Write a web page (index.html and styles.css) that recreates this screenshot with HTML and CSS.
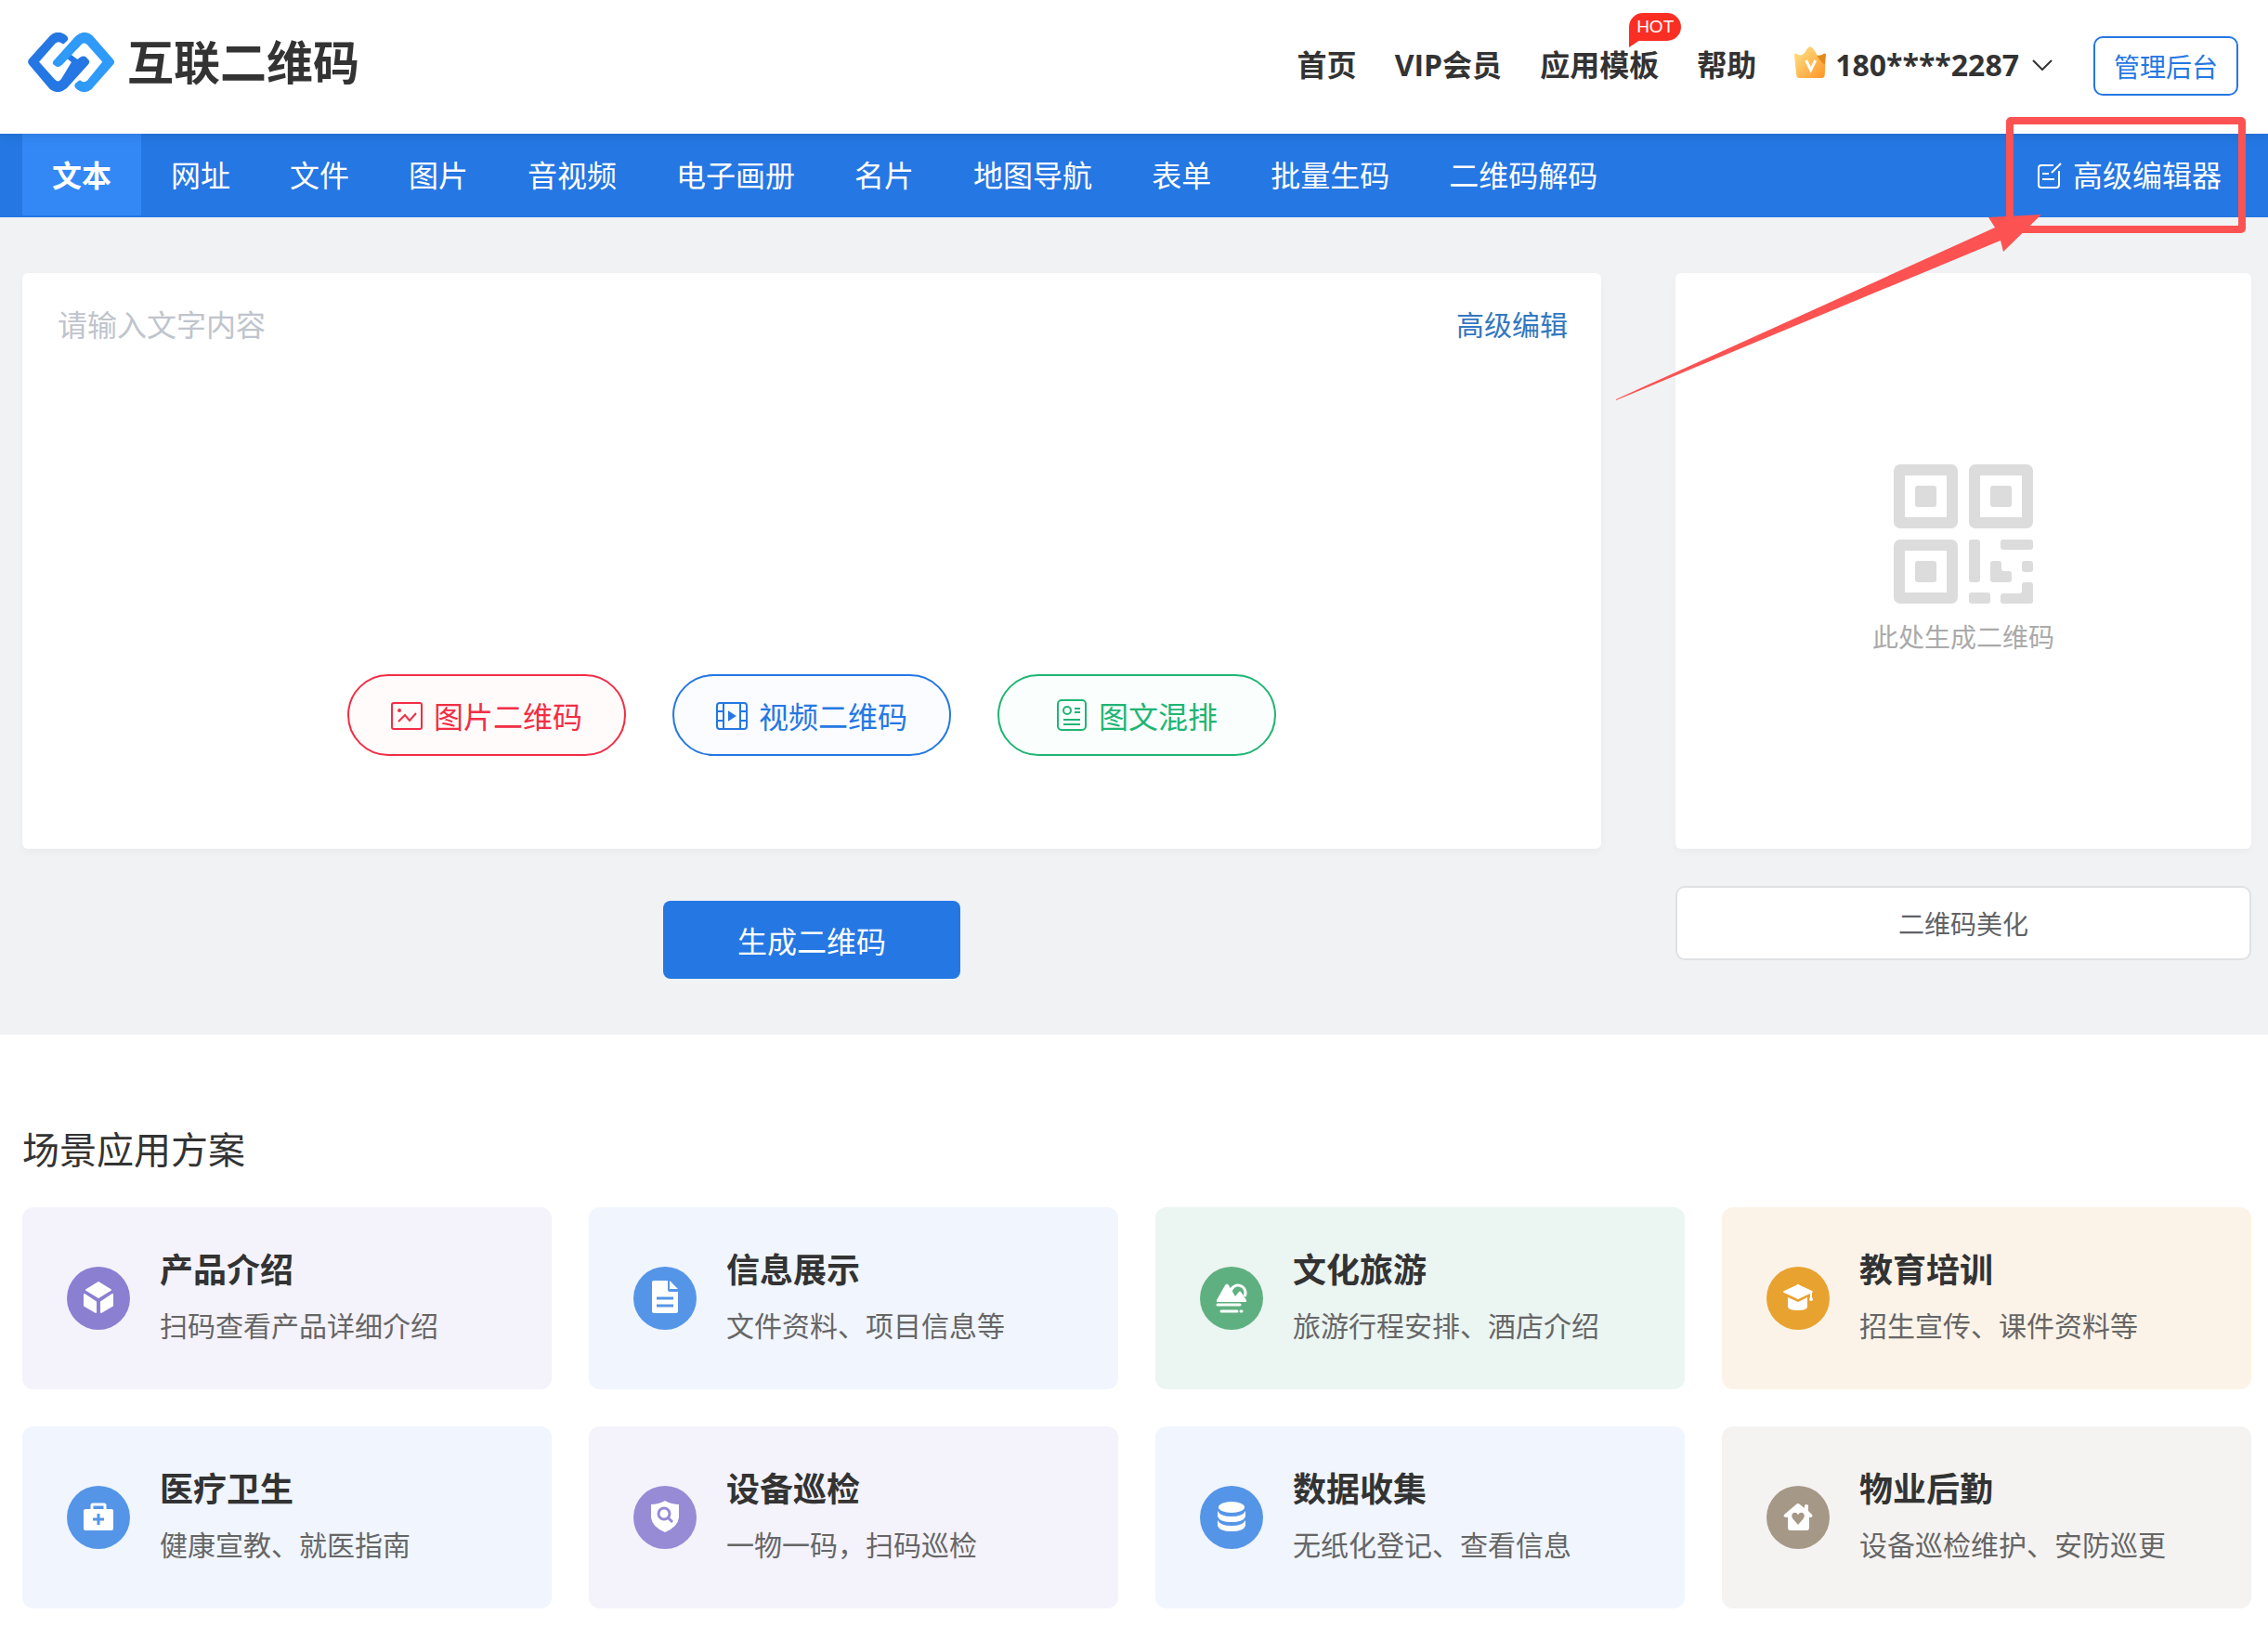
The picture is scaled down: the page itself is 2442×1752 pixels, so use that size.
FILE: index.html
```html
<!DOCTYPE html>
<html lang="zh-CN">
<head>
  <meta charset="UTF-8">
  <meta name="viewport" content="width=device-width, initial-scale=1.0">
  <title>互联二维码</title>
  <link rel="stylesheet" href="styles.css">
</head>
<body>

<header class="header">
  <a class="logo" href="#">
    <svg class="logo-img" viewBox="0 0 279 192" aria-hidden="true">
      <g stroke-width="8" stroke-linejoin="round">
        <path fill="#2577e3" stroke="#2577e3" d="M124 24L114 33Q98 20 85 33L31 95L84 154Q98 169 110 154L146 95L126 78L138 75L160 92L172 83Q180 78 187 84L193 91Q196 95 193 99L122 178Q97 198 73 179L7 101Q2 95 7 88L76 12Q97 -5 119 11Q129 18 124 24Z"/>
        <path fill="#2f9af8" stroke="#2f9af8" d="M86 94L158 14Q182 -6 206 13L272 89Q278 95 272 102L204 179Q185 196 163 182Q150 173 158 166L168 158Q183 171 196 156L246 95L195 37Q182 24 170 36L107 102Q98 110 91 104Q81 100 86 94Z"/>
      </g>
    </svg>
    <span>互联二维码</span>
  </a>
  <nav class="menu">
    <a href="#">首页</a>
    <a href="#">VIP会员</a>
    <a class="has-hot" href="#">应用模板<span class="hot">HOT</span></a>
    <a href="#">帮助</a>
    <a class="user" href="#">
      <svg class="crown" viewBox="0 0 102 102" aria-hidden="true">
        <defs>
          <linearGradient id="gold" x1="0" y1="0" x2="1" y2="1">
            <stop offset="0" stop-color="#ffe58a"/>
            <stop offset="1" stop-color="#ff9426"/>
          </linearGradient>
        </defs>
        <path fill="#e38a1c" d="M68 28Q84 32 96 23Q102 20 102 28L98 70L60 60Z"/>
        <path fill="url(#gold)" d="M0 28Q0 20 6 23Q22 34 32 22L43 5Q51 -4 59 5L70 22Q82 50 100 60L98 94Q97 102 89 102H16Q8 102 7 94Z"/>
        <path fill="none" stroke="#fff" stroke-width="9" d="M38 45L53 76L68 45"/>
      </svg>
      <span>180****2287</span>
      <svg class="arrow-down" viewBox="0 0 22 12" aria-hidden="true"><path d="M1 1L11 11L21 1"/></svg>
    </a>
  </nav>
  <button class="admin-btn" type="button">管理后台</button>
</header>

<nav class="tabs">
  <a class="active" href="#">文本</a>
  <a href="#">网址</a>
  <a href="#">文件</a>
  <a href="#">图片</a>
  <a href="#">音视频</a>
  <a href="#">电子画册</a>
  <a href="#">名片</a>
  <a href="#">地图导航</a>
  <a href="#">表单</a>
  <a href="#">批量生码</a>
  <a href="#">二维码解码</a>
  <div class="tabs-right">
    <a class="editor-link" href="#">
      <svg class="edit-icon" viewBox="0 0 26 28" aria-hidden="true"><path d="M17 3H4Q1 3 1 6V24Q1 27 4 27H20Q23 27 23 24V9M25 1L15 11M5 12H12M5 18H18"/></svg>
      高级编辑器
    </a>
    <svg class="mark" viewBox="0 0 680 306" aria-hidden="true">
      <rect x="426" y="4" width="250" height="117" rx="1"/>
      <path d="M2 304L410 119L403 108L460 105L419 145L416 133L2 305Z"/>
    </svg>
  </div>
</nav>

<main>
  <section class="generate">
    <div class="left">
      <div class="panel editor">
        <textarea class="content" placeholder="请输入文字内容" aria-label="文字内容"></textarea>
        <a class="more" href="#">高级编辑</a>
        <div class="types">
          <button class="type red" type="button">
            <svg viewBox="0 0 34 34" aria-hidden="true"><rect x="1" y="4" width="32" height="28" rx="2"/><path d="M8 24L15 17L20 23L27 15"/><circle class="solid" cx="9" cy="12" r="1"/></svg>
            图片二维码
          </button>
          <button class="type blue" type="button">
            <svg viewBox="0 0 34 34" aria-hidden="true"><rect x="1" y="4" width="32" height="28" rx="3"/><path d="M8 4V32M26 4V32M1 13H8M1 23H8M26 13H33M26 23H33"/><path class="solid" d="M14 14L20 18L14 22Z"/></svg>
            视频二维码
          </button>
          <button class="type green" type="button">
            <svg viewBox="0 0 34 34" aria-hidden="true"><rect x="2" y="1" width="30" height="32" rx="4"/><circle cx="12" cy="12" r="4"/><path d="M20 10H26M20 14H26M8 22H26M8 27H26"/></svg>
            图文混排
          </button>
        </div>
      </div>
      <button class="submit" type="button">生成二维码</button>
    </div>
    <div class="right">
      <div class="panel preview">
        <svg class="qr" viewBox="0 0 150 150" aria-hidden="true">
          <g fill="none" stroke="#dcdcdc" stroke-width="12">
            <rect x="6" y="6" width="57" height="57" rx="1"/>
            <rect x="87" y="6" width="57" height="57" rx="1"/>
            <rect x="6" y="87" width="57" height="57" rx="1"/>
          </g>
          <g fill="#dcdcdc">
            <rect x="23" y="23" width="23" height="23" rx="3"/>
            <rect x="104" y="23" width="23" height="23" rx="3"/>
            <rect x="23" y="104" width="23" height="23" rx="3"/>
            <rect x="81" y="81" width="12" height="46" rx="3"/>
            <rect x="115" y="81" width="35" height="11" rx="3"/>
            <rect x="138" y="104" width="12" height="12" rx="3"/>
            <rect x="81" y="138" width="23" height="12" rx="3"/>
            <path d="M107 104H113Q116 104 116 107V112Q116 115 119 115H124Q127 115 127 118V124Q127 127 124 127H107Q104 127 104 124V107Q104 104 107 104Z"/>
            <path d="M141 127H147Q150 127 150 130V147Q150 150 147 150H118Q115 150 115 147V142Q115 139 118 139H135Q138 139 138 136V130Q138 127 141 127Z"/>
          </g>
        </svg>
        <p>此处生成二维码</p>
      </div>
      <button class="beautify" type="button">二维码美化</button>
    </div>
  </section>

  <section class="scenes">
    <h2>场景应用方案</h2>
    <div class="cards">
      <a class="card purple" href="#">
        <svg class="card-icon" viewBox="0 0 68 68" aria-hidden="true">
          <circle cx="34" cy="34" r="34" fill="#8b7fd2"/>
          <g fill="#fff" stroke="#fff" stroke-width="2" stroke-linejoin="round"><path d="M34 17L47 25L34 33L21 25Z"/><path d="M19 30L31 38V49L19 42Z"/><path d="M49 30L37 38V49L49 42Z"/></g>
        </svg>
        <div><h3>产品介绍</h3><p>扫码查看产品详细介绍</p></div>
      </a>
      <a class="card blue" href="#">
        <svg class="card-icon" viewBox="0 0 68 68" aria-hidden="true">
          <circle cx="34" cy="34" r="34" fill="#5595e8"/>
          <path fill="#fff" d="M22 15H37V25Q37 27 39 27H48V48Q48 50 46 50H22Q20 50 20 48V17Q20 15 22 15ZM39 15L48 24H39Z"/>
          <path stroke="#5595e8" stroke-width="3" d="M25 34H43M25 42H43"/>
        </svg>
        <div><h3>信息展示</h3><p>文件资料、项目信息等</p></div>
      </a>
      <a class="card green" href="#">
        <svg class="card-icon" viewBox="0 0 68 68" aria-hidden="true">
          <circle cx="34" cy="34" r="34" fill="#5fb080"/>
          <path fill="none" stroke="#fff" stroke-width="3" d="M33 28A8 8 0 1 1 48 32"/>
          <path fill="#fff" d="M18 36L27 20Q29 17 31 20L38 32L42 27Q43 26 44 27L50 36V38H18Z"/>
          <path stroke="#fff" stroke-width="3" stroke-linecap="round" d="M19 41H43M23 48H40M44 48H45"/>
        </svg>
        <div><h3>文化旅游</h3><p>旅游行程安排、酒店介绍</p></div>
      </a>
      <a class="card orange" href="#">
        <svg class="card-icon" viewBox="0 0 68 68" aria-hidden="true">
          <circle cx="34" cy="34" r="34" fill="#e8a22f"/>
          <path fill="#fff" d="M32 20Q34 18 36 20L49 26Q51 27 49 28L36 34Q34 36 32 34L19 28Q17 27 19 26Z"/>
          <path fill="#fff" d="M23 33L34 38L44 33V43Q44 47 34 47Q23 47 23 43Z"/>
          <path stroke="#fff" stroke-width="2" d="M48 27V34"/><circle cx="48" cy="35" r="2" fill="#fff"/>
        </svg>
        <div><h3>教育培训</h3><p>招生宣传、课件资料等</p></div>
      </a>
      <a class="card blue" href="#">
        <svg class="card-icon" viewBox="0 0 68 68" aria-hidden="true">
          <circle cx="34" cy="34" r="34" fill="#5595e8"/>
          <rect x="27" y="20" width="14" height="10" rx="1" fill="none" stroke="#fff" stroke-width="3"/>
          <rect x="18" y="25" width="32" height="23" rx="2" fill="#fff"/>
          <path stroke="#5595e8" stroke-width="3" d="M34 30V42M28 36H40"/>
        </svg>
        <div><h3>医疗卫生</h3><p>健康宣教、就医指南</p></div>
      </a>
      <a class="card purple" href="#">
        <svg class="card-icon" viewBox="0 0 68 68" aria-hidden="true">
          <circle cx="34" cy="34" r="34" fill="#978bd6"/>
          <path fill="#fff" d="M34 16Q41 20 49 20V34Q48 44 34 50Q20 44 19 34V20Q27 20 34 16Z"/>
          <g fill="none" stroke="#978bd6" stroke-width="3"><circle cx="33" cy="30" r="6"/><path d="M37 34L42 39"/></g>
        </svg>
        <div><h3>设备巡检</h3><p>一物一码，扫码巡检</p></div>
      </a>
      <a class="card blue" href="#">
        <svg class="card-icon" viewBox="0 0 68 68" aria-hidden="true">
          <circle cx="34" cy="34" r="34" fill="#5595e8"/>
          <g fill="#fff"><ellipse cx="34" cy="23" rx="14" ry="6"/><path d="M19 27Q22 33 34 33T49 27V33Q47 39 34 39T19 33Z"/><path d="M19 37Q22 43 34 43T49 37V43Q47 49 34 49T19 43Z"/></g>
        </svg>
        <div><h3>数据收集</h3><p>无纸化登记、查看信息</p></div>
      </a>
      <a class="card gray" href="#">
        <svg class="card-icon" viewBox="0 0 68 68" aria-hidden="true">
          <circle cx="34" cy="34" r="34" fill="#a59887"/>
          <path fill="#fff" d="M32 20Q34 18 36 20L41 24V21Q43 19 45 21V27L49 31Q51 34 46 34V45Q46 48 43 48H26Q23 48 23 45V34Q17 34 19 31Z"/>
          <path fill="#a59887" d="M34 42L28 35Q26 31 29 29Q32 28 34 31Q36 28 39 29Q42 31 40 35Z"/>
        </svg>
        <div><h3>物业后勤</h3><p>设备巡检维护、安防巡更</p></div>
      </a>
    </div>
  </section>
</main>

</body>
</html>
```
FILE: styles.css
```css
* {
  box-sizing: border-box;
}
body {
  margin: 0;
  background: #fff;
  color: #333;
  font-family: "Open Sans", "Noto Sans CJK SC", sans-serif;
  font-size: 32px;
}
h2, h3, p {
  margin: 0;
}
a {
  color: inherit;
  text-decoration: none;
}
button {
  font-family: inherit;
  cursor: pointer;
}

/* header */
.header {
  position: relative;
  z-index: 1;
  display: flex;
  align-items: center;
  height: 144px;
  padding: 0 32px 2px 30px;
  background: #fff;
  box-shadow: 0 4px 10px rgba(0, 0, 0, 0.08);
}
.logo {
  display: flex;
  align-items: center;
  gap: 14px;
  margin-right: auto;
  padding-bottom: 8px;
  font-size: 50px;
  font-weight: bold;
  line-height: 64px;
}
.logo-img {
  width: 93px;
  height: 64px;
}
.menu {
  display: flex;
  align-items: center;
  gap: 41px;
  margin-right: 44px;
  padding-bottom: 2px;
  font-weight: bold;
  line-height: 48px;
}
.has-hot {
  position: relative;
}
.hot {
  position: absolute;
  top: -32px;
  left: 96px;
  padding: 0 8px;
  border-radius: 15px 15px 15px 0;
  background: #fb2e24;
  color: #fff;
  font-family: "Liberation Sans", sans-serif;
  font-size: 19px;
  font-weight: normal;
  line-height: 30px;
}
.hot::after {
  content: "";
  position: absolute;
  top: 29px;
  left: 0;
  border-top: 8px solid #fb2e24;
  border-right: 12px solid transparent;
}
.user {
  display: flex;
  align-items: center;
}
.crown {
  width: 34px;
  height: 34px;
  margin: 0 10px 6px 0;
}
.arrow-down {
  width: 22px;
  height: 12px;
  margin-left: 14px;
  fill: none;
  stroke: #333;
  stroke-width: 2;
}
.admin-btn {
  height: 64px;
  padding: 0 20px;
  border: 2px solid #2577e3;
  border-radius: 10px;
  background: #fff;
  color: #2577e3;
  font-size: 28px;
}

/* tabs */
.tabs {
  display: flex;
  height: 90px;
  padding: 0 18px 0 24px;
  background: #2577e3;
  color: #fff;
  line-height: 90px;
}
.tabs a {
  height: 88px;
  padding: 0 32px;
}
.tabs .active {
  background: #3488f5;
  font-weight: bold;
}
.tabs-right {
  position: relative;
  margin-left: auto;
}
.tabs .editor-link {
  display: flex;
  align-items: center;
  gap: 12px;
  height: 90px;
}
.edit-icon {
  width: 26px;
  height: 28px;
  fill: none;
  stroke: #fff;
  stroke-width: 2;
}
.mark {
  position: absolute;
  z-index: 2;
  top: -18px;
  right: 6px;
  width: 680px;
  height: 306px;
  pointer-events: none;
}
.mark rect {
  fill: none;
  stroke: #fc5252;
  stroke-width: 8;
}
.mark path {
  fill: #fc5252;
}

/* generate */
.generate {
  display: grid;
  grid-template-columns: 1700fr 620fr;
  gap: 80px;
  padding: 60px 18px 60px 24px;
  background: #f1f2f4;
}
.left, .right {
  display: flex;
  flex-direction: column;
}
.panel {
  min-height: 620px;
  border-radius: 6px;
  background: #fff;
  box-shadow: 0 4px 8px rgba(0, 0, 0, 0.03);
}
.editor {
  position: relative;
  display: flex;
  flex-direction: column;
  padding: 32px 36px 100px;
}
.content {
  flex: 1;
  width: 100%;
  padding: 0 160px 0 2px;
  border: none;
  outline: none;
  resize: none;
  background: transparent;
  color: #333;
  font-family: inherit;
  font-size: 32px;
  line-height: 48px;
}
.content::placeholder {
  color: #c0c4cc;
}
.more {
  position: absolute;
  top: 32px;
  right: 36px;
  color: #3377c0;
  font-size: 30px;
  line-height: 48px;
}
.types {
  display: flex;
  justify-content: center;
  gap: 50px;
}
.type {
  display: flex;
  align-items: center;
  justify-content: center;
  gap: 12px;
  width: 300px;
  height: 88px;
  border: 2px solid;
  border-radius: 44px;
  font-size: 32px;
}
.type svg {
  width: 34px;
  height: 34px;
  fill: none;
  stroke: currentColor;
  stroke-width: 2;
}
.type .solid {
  fill: currentColor;
}
.type.red {
  background: #fffbfb;
  color: #f22d45;
}
.type.blue {
  background: #fbfcff;
  color: #2577e3;
}
.type.green {
  background: #fafffd;
  color: #1fb574;
}
.submit {
  align-self: center;
  width: 320px;
  height: 84px;
  margin-top: 56px;
  border: none;
  border-radius: 8px;
  background: #2577e3;
  color: #fff;
  font-size: 32px;
}
.preview {
  display: flex;
  flex-direction: column;
  align-items: center;
  justify-content: center;
  gap: 14px;
  color: #aaa;
  font-size: 28px;
  line-height: 44px;
}
.qr {
  width: 150px;
  height: 150px;
}
.beautify {
  height: 80px;
  margin-top: 40px;
  border: 2px solid #e0e1e3;
  border-radius: 10px;
  background: #fff;
  color: #606266;
  font-size: 28px;
}

/* scenes */
.scenes {
  padding: 94px 18px 20px 24px;
}
.scenes h2 {
  margin-bottom: 32px;
  font-size: 40px;
  font-weight: normal;
  line-height: 60px;
}
.cards {
  display: grid;
  grid-template-columns: repeat(4, 1fr);
  gap: 40px;
}
.card {
  display: flex;
  align-items: center;
  gap: 32px;
  min-height: 196px;
  padding: 0 48px;
  border-radius: 12px;
}
.card.purple {
  background: #f4f2fb;
}
.card.blue {
  background: #f0f5fe;
}
.card.green {
  background: #ebf5f2;
}
.card.orange {
  background: #fcf3e8;
}
.card.gray {
  background: #f5f3f2;
}
.card-icon {
  flex: none;
  width: 68px;
  height: 68px;
}
.card h3 {
  font-size: 36px;
  line-height: 60px;
}
.card p {
  color: #666;
  font-size: 30px;
  line-height: 60px;
}
```
